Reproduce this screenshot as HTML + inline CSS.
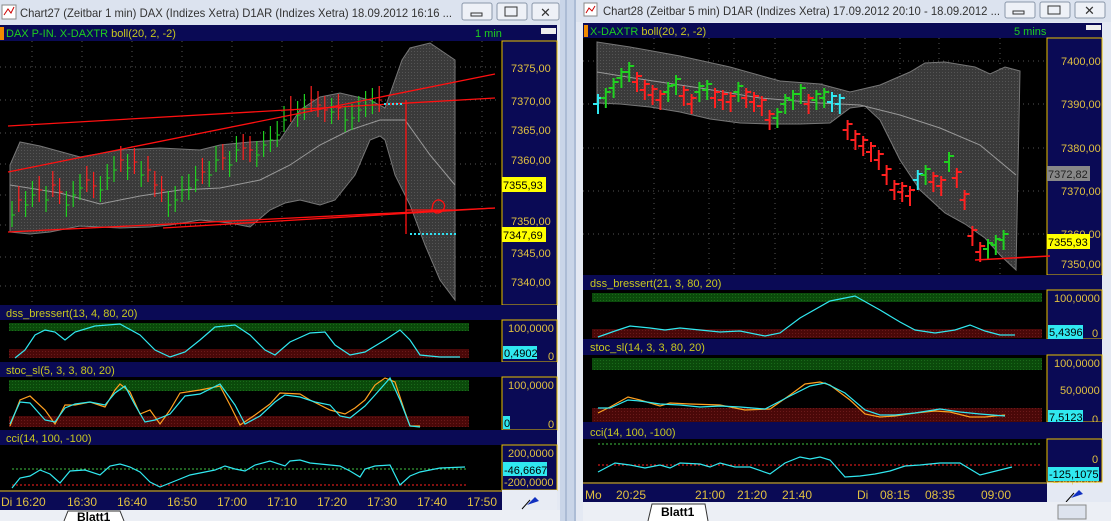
<!DOCTYPE html>
<html><head><meta charset="utf-8"><style>
body{margin:0;width:1111px;height:521px;overflow:hidden;background:#dfe6f2;font-family:"Liberation Sans",sans-serif}
svg{position:absolute;left:0;top:0}
</style></head><body>
<svg id="s" width="1111" height="521" xmlns="http://www.w3.org/2000/svg" font-family="Liberation Sans, sans-serif">
<defs>
<pattern id="gp" width="3" height="3" patternUnits="userSpaceOnUse"><rect width="3" height="3" fill="#3a3a3a"/><rect width="1" height="1" fill="#555"/></pattern>
<pattern id="gr" width="3" height="3" patternUnits="userSpaceOnUse"><rect width="3" height="3" fill="#0b4a0b"/><rect width="1" height="1" fill="#1a6a1a"/></pattern>
<pattern id="rd" width="3" height="3" patternUnits="userSpaceOnUse"><rect width="3" height="3" fill="#4a0808"/><rect width="1" height="1" fill="#6a1a1a"/></pattern>
</defs>
<!-- LEFT WINDOW -->
<rect x="0" y="0" width="560" height="521" fill="#e4e9f3"/>
<rect x="0" y="0" width="560" height="25" fill="#dce3ef"/>
<rect x="2" y="5" width="14" height="14" fill="#fff" stroke="#888"/><path d="M4 15 L8 9 L11 13 L14 7" stroke="#c00" fill="none"/>
<text x="20" y="17" font-size="12" fill="#333" textLength="432" lengthAdjust="spacingAndGlyphs">Chart27 (Zeitbar 1 min)  DAX (Indizes Xetra) D1AR (Indizes Xetra) 18.09.2012 16:16 ...</text>
<g fill="#eef1f7" stroke="#8a97aa"><rect x="462" y="3" width="30" height="17" rx="2"/><rect x="497" y="3" width="30" height="17" rx="2"/><rect x="532" y="3" width="27" height="17" rx="2"/></g>
<rect x="471" y="13" width="11" height="3" fill="none" stroke="#333"/><rect x="505" y="7" width="12" height="9" fill="none" stroke="#333"/>
<text x="540" y="17" font-size="13" fill="#333">✕</text>
<rect x="0" y="25" width="557" height="16" fill="#0a0a55"/>
<rect x="0" y="27" width="4" height="13" fill="#f08a00"/>
<text x="6" y="37" font-size="11"><tspan fill="#1fcf1f">DAX P-IN. X-DAXTR </tspan><tspan fill="#c8c820">boll(20, 2, -2)</tspan></text>
<text x="475" y="37" font-size="11" fill="#1fcf1f">1 min</text>
<rect x="541" y="28" width="15" height="6" fill="#eee"/>
<rect x="0" y="41" width="502" height="264" fill="#000"/>
<rect x="502" y="41" width="55" height="264" fill="#0a0a55" stroke="#e8c000"/>
<g id="lgrid"></g>
<path d="M10,165 L20,142 L40,146 L80,157 L120,150 L160,148 L200,150 L220,145 L250,142 L280,140 L300,110 L320,97 L340,93 L370,100 L385,108 L402,60 L410,48 L430,43 L455,60 L455,300 L440,280 L425,245 L410,205 L395,175 L385,140 L380,136 L370,140 L355,175 L335,200 L320,205 L300,200 L285,203 L270,210 L250,227 L230,223 L200,220 L170,225 L150,227 L120,228 L80,226 L50,232 L30,234 L10,232 Z" fill="url(#gp)" stroke="#777"/>
<path d="M10,185 L60,193 L100,204 L140,196 L180,190 L220,188 L260,180 L290,165 L320,145 L350,130 L380,120 L405,120 L430,155 L455,185" stroke="#999" fill="none"/>
<g id="lbars"></g>
<g stroke="#ff1010" stroke-width="1.3" fill="none">
<line x1="8" y1="172" x2="495" y2="74"/><line x1="8" y1="126" x2="495" y2="98"/>
<line x1="8" y1="232" x2="495" y2="208"/><line x1="163" y1="228" x2="495" y2="208"/>
<line x1="406" y1="100" x2="406" y2="234"/><line x1="406" y1="210" x2="452" y2="210"/>
<path d="M433,204 q4,-7 10,-2 q4,5 -2,10 q-6,3 -9,-3 z"/>
</g>
<line x1="410" y1="234" x2="456" y2="234" stroke="#30e0f0" stroke-dasharray="2 2" stroke-width="2"/>
<line x1="384" y1="104" x2="404" y2="104" stroke="#30e0f0" stroke-dasharray="2 2" stroke-width="2"/>
<g fill="#e0c040" font-size="11"><text x="511" y="72">7375,00</text><text x="511" y="105">7370,00</text><text x="511" y="134">7365,00</text><text x="511" y="164">7360,00</text><text x="511" y="225">7350,00</text><text x="511" y="257">7345,00</text><text x="511" y="286">7340,00</text></g>
<rect x="502" y="177" width="44" height="15" fill="#ffff00"/><text x="503" y="189" font-size="11" fill="#000">7355,93</text>
<rect x="502" y="227" width="44" height="15" fill="#ffff00"/><text x="503" y="239" font-size="11" fill="#000">7347,69</text>
<!-- sub panels left -->
<rect x="0" y="305" width="557" height="15" fill="#0a0a55"/><text x="6" y="317" font-size="11" fill="#c8c820">dss_bressert(13, 4, 80, 20)</text>
<rect x="0" y="320" width="502" height="42" fill="#000"/><rect x="9" y="323" width="460" height="8" fill="url(#gr)"/><rect x="9" y="349" width="460" height="9" fill="url(#rd)"/>
<rect x="502" y="320" width="55" height="42" fill="#0a0a55" stroke="#e8c000"/>
<text x="508" y="332" font-size="11" fill="#e0c040">100,0000</text><text x="548" y="360" font-size="11" fill="#e0c040">0</text>
<rect x="503" y="346" width="34" height="13" fill="#30e8f0"/><text x="504" y="357" font-size="11" fill="#000">0,4902</text>
<rect x="0" y="362" width="557" height="15" fill="#0a0a55"/><text x="6" y="374" font-size="11" fill="#c8c820">stoc_sl(5, 3, 3, 80, 20)</text>
<rect x="0" y="377" width="502" height="53" fill="#000"/><rect x="9" y="380" width="460" height="11" fill="url(#gr)"/><rect x="9" y="416" width="460" height="11" fill="url(#rd)"/>
<rect x="502" y="377" width="55" height="53" fill="#0a0a55" stroke="#e8c000"/>
<text x="508" y="389" font-size="11" fill="#e0c040">100,0000</text><text x="548" y="428" font-size="11" fill="#e0c040">0</text>
<rect x="503" y="416" width="7" height="13" fill="#30e8f0"/><text x="504" y="427" font-size="11" fill="#000">0</text>
<rect x="0" y="430" width="557" height="15" fill="#0a0a55"/><text x="6" y="442" font-size="11" fill="#c8c820">cci(14, 100, -100)</text>
<rect x="0" y="445" width="502" height="45" fill="#000"/>
<line x1="12" y1="469" x2="467" y2="469" stroke="#40c040" stroke-dasharray="2 2"/><line x1="12" y1="485" x2="467" y2="485" stroke="#ff2020" stroke-dasharray="2 2"/>
<rect x="502" y="445" width="55" height="45" fill="#0a0a55" stroke="#e8c000"/>
<text x="508" y="457" font-size="11" fill="#e0c040">200,0000</text><text x="504" y="486" font-size="11" fill="#e0c040">-200,0000</text>
<rect x="503" y="462" width="44" height="14" fill="#30e8f0"/><text x="504" y="474" font-size="11" fill="#000">-46,6667</text>
<rect x="0" y="490" width="502" height="20" fill="#0a0a55"/><rect x="502" y="490" width="55" height="20" fill="#e8ecf4"/>
<line x1="0" y1="491" x2="502" y2="491" stroke="#e8c000"/>
<g font-size="12" fill="#e0c040"><text x="1" y="506">Di 16:20</text><text x="67" y="506">16:30</text><text x="117" y="506">16:40</text><text x="167" y="506">16:50</text><text x="217" y="506">17:00</text><text x="267" y="506">17:10</text><text x="317" y="506">17:20</text><text x="367" y="506">17:30</text><text x="417" y="506">17:40</text><text x="467" y="506">17:50</text></g>
<path d="M527,505 l8,-8 l4,4 z" fill="#1030c0"/><line x1="522" y1="509" x2="530" y2="500" stroke="#000"/>
<rect x="0" y="510" width="560" height="11" fill="#eceff5"/>
<path d="M64,521 L68,511 L120,511 L124,521" fill="#fff" stroke="#333"/><text x="77" y="521" font-size="12" font-weight="bold" fill="#000">Blatt1</text>
<!-- divider -->
<rect x="560" y="0" width="16" height="521" fill="#c9d5e8"/><line x1="566" y1="0" x2="566" y2="521" stroke="#8fa2c2"/><line x1="575" y1="0" x2="575" y2="521" stroke="#8fa2c2"/>
<!-- RIGHT WINDOW -->
<rect x="576" y="0" width="535" height="521" fill="#e4e9f3"/>
<rect x="576" y="0" width="535" height="22" fill="#dce3ef"/>
<rect x="584" y="3" width="13" height="13" fill="#fff" stroke="#888"/><path d="M586 13 L589 8 L592 11 L595 6" stroke="#c00" fill="none"/>
<text x="603" y="15" font-size="12" fill="#333" textLength="397" lengthAdjust="spacingAndGlyphs">Chart28 (Zeitbar 5 min)  D1AR (Indizes Xetra) 17.09.2012 20:10 - 18.09.2012 ...</text>
<g fill="#eef1f7" stroke="#8a97aa"><rect x="1005" y="2" width="30" height="16" rx="2"/><rect x="1040" y="2" width="30" height="16" rx="2"/><rect x="1075" y="2" width="30" height="16" rx="2"/></g>
<rect x="1013" y="11" width="11" height="3" fill="none" stroke="#333"/><rect x="1048" y="6" width="12" height="8" fill="none" stroke="#333"/>
<text x="1084" y="15" font-size="13" fill="#333">✕</text>
<rect x="583" y="23" width="519" height="15" fill="#0a0a55"/>
<rect x="584" y="25" width="4" height="12" fill="#f08a00"/>
<text x="590" y="35" font-size="11"><tspan fill="#1fcf1f">X-DAXTR </tspan><tspan fill="#c8c820">boll(20, 2, -2)</tspan></text>
<text x="1014" y="35" font-size="11" fill="#1fcf1f">5 mins</text>
<rect x="1086" y="25" width="15" height="5" fill="#eee"/>
<rect x="583" y="38" width="464" height="237" fill="#000"/>
<rect x="1047" y="38" width="55" height="237" fill="#0a0a55" stroke="#e8c000"/>
<g id="rgrid"></g>
<path d="M597,42 L630,47 L680,56 L730,67 L780,81 L820,84 L850,92 L880,85 L910,72 L925,63 L945,62 L975,67 L990,74 L1005,67 L1020,71 L1016,270 L1000,255 L985,238 L965,224 L945,213 L920,190 L900,160 L880,120 L865,106 L850,108 L830,123 L800,124 L770,124 L740,123 L710,119 L680,112 L650,107 L620,104 L597,103 Z" fill="url(#gp)" stroke="#777"/>
<path d="M597,72 L640,79 L700,88 L760,98 L820,103 L860,105 L900,115 L940,128 L980,145 L1016,175" stroke="#999" fill="none"/>
<g id="rbars"></g>
<path d="M975,260 L1050,256" stroke="#ff1010" stroke-width="1.5"/>
<g fill="#e0c040" font-size="11"><text x="1061" y="65">7400,00</text><text x="1061" y="108">7390,00</text><text x="1061" y="152">7380,00</text><text x="1061" y="195">7370,00</text><text x="1061" y="238">7360,00</text><text x="1061" y="268">7350,00</text></g>
<rect x="1047" y="166" width="43" height="15" fill="#888"/><text x="1048" y="178" font-size="11" fill="#222">7372,82</text>
<rect x="1047" y="234" width="43" height="15" fill="#ffff00"/><text x="1048" y="246" font-size="11" fill="#000">7355,93</text>
<rect x="583" y="275" width="519" height="15" fill="#0a0a55"/><text x="590" y="287" font-size="11" fill="#c8c820">dss_bressert(21, 3, 80, 20)</text>
<rect x="583" y="290" width="464" height="49" fill="#000"/><rect x="592" y="293" width="450" height="9" fill="url(#gr)"/><rect x="592" y="329" width="450" height="9" fill="url(#rd)"/>
<rect x="1047" y="290" width="55" height="49" fill="#0a0a55" stroke="#e8c000"/>
<text x="1054" y="302" font-size="11" fill="#e0c040">100,0000</text><text x="1092" y="337" font-size="11" fill="#e0c040">0</text>
<rect x="1048" y="325" width="35" height="14" fill="#30e8f0"/><text x="1049" y="336" font-size="11" fill="#000">5,4396</text>
<rect x="583" y="339" width="519" height="16" fill="#0a0a55"/><text x="590" y="351" font-size="11" fill="#c8c820">stoc_sl(14, 3, 3, 80, 20)</text>
<rect x="583" y="355" width="464" height="67" fill="#000"/><rect x="592" y="358" width="450" height="12" fill="url(#gr)"/><rect x="592" y="408" width="450" height="14" fill="url(#rd)"/>
<rect x="1047" y="355" width="55" height="67" fill="#0a0a55" stroke="#e8c000"/>
<text x="1054" y="367" font-size="11" fill="#e0c040">100,0000</text><text x="1060" y="394" font-size="11" fill="#e0c040">50,0000</text><text x="1092" y="423" font-size="11" fill="#e0c040">0</text>
<rect x="1048" y="410" width="35" height="14" fill="#30e8f0"/><text x="1049" y="421" font-size="11" fill="#000">7,5123</text>
<rect x="583" y="422" width="519" height="17" fill="#0a0a55"/><text x="590" y="436" font-size="11" fill="#c8c820">cci(14, 100, -100)</text>
<rect x="583" y="439" width="464" height="43" fill="#000"/>
<line x1="598" y1="444" x2="1040" y2="444" stroke="#40c040" stroke-dasharray="2 2"/><line x1="598" y1="465" x2="1040" y2="465" stroke="#ff2020" stroke-dasharray="2 2"/>
<rect x="1047" y="439" width="55" height="43" fill="#0a0a55" stroke="#e8c000"/>
<text x="1092" y="463" font-size="11" fill="#e0c040">0</text><text x="1049" y="483" font-size="11" fill="#e0c040">-200,0000</text>
<rect x="1048" y="467" width="51" height="14" fill="#30e8f0"/><text x="1049" y="478" font-size="11" fill="#000">-125,1075</text>
<rect x="583" y="482" width="464" height="20" fill="#0a0a55"/><line x1="583" y1="483" x2="1047" y2="483" stroke="#e8c000"/>
<g font-size="12" fill="#e0c040"><text x="585" y="499">Mo</text><text x="616" y="499">20:25</text><text x="695" y="499">21:00</text><text x="737" y="499">21:20</text><text x="782" y="499">21:40</text><text x="857" y="499">Di</text><text x="880" y="499">08:15</text><text x="925" y="499">08:35</text><text x="981" y="499">09:00</text></g>
<path d="M1071,498 l8,-8 l4,4 z" fill="#1030c0"/><line x1="1066" y1="502" x2="1074" y2="493" stroke="#000"/>
<rect x="583" y="502" width="528" height="19" fill="#eceff5"/>
<path d="M648,521 L652,504 L705,504 L708,521" fill="#fff" stroke="#333"/><text x="661" y="516" font-size="12" font-weight="bold" fill="#000">Blatt1</text>
<rect x="1058" y="505" width="28" height="14" fill="#dde3ee" stroke="#888"/>
</svg>
<script>
var NS="http://www.w3.org/2000/svg";
function el(p,t,a){var e=document.createElementNS(NS,t);for(var k in a)e.setAttribute(k,a[k]);p.appendChild(e);return e;}
function poly(p,pts,c){el(document.getElementById("s"),"polyline",{points:pts,fill:"none",stroke:c,"stroke-width":1.2});}
var lg=document.getElementById("lgrid");
[32,82,132,182,232,282,332,382,432,482].forEach(function(x){el(lg,"line",{x1:x,y1:41,x2:x,y2:305,stroke:"#555","stroke-dasharray":"1 4"});});
[67,100,133,164,195,225,257,286].forEach(function(y){el(lg,"line",{x1:0,y1:y,x2:500,y2:y,stroke:"#555","stroke-dasharray":"1 4"});});
var rg=document.getElementById("rgrid");
[654,709,734,775,822,865,900,939,1000].forEach(function(x){el(rg,"line",{x1:x,y1:38,x2:x,y2:275,stroke:"#555","stroke-dasharray":"1 4"});});
[61,104,148,191,234,277].forEach(function(y){el(rg,"line",{x1:583,y1:y,x2:1045,y2:y,stroke:"#555","stroke-dasharray":"1 4"});});
var lb=document.getElementById("lbars");
var c=[215,200,205,195,190,200,185,192,205,195,188,180,186,190,178,170,160,168,162,175,170,185,190,205,200,190,188,180,172,175,160,158,165,150,148,150,155,145,140,135,120,110,115,108,100,105,110,112,108,120,118,110,105,102,100];
for(var i=0;i<c.length;i++){var x=12+i*6.8,y=c[i];var col=(c[i+1]||y)<y?"#20d020":"#ff2020";el(lb,"line",{x1:x,y1:y-14,x2:x,y2:y+12,stroke:col,"stroke-width":1.2});el(lb,"line",{x1:x,y1:y,x2:x+3,y2:y,stroke:col});}
var rb=document.getElementById("rbars");
var rc=[104,98,88,78,72,82,90,95,100,92,85,96,104,92,90,98,100,102,92,98,102,106,120,118,104,100,94,104,100,98,102,104,130,140,146,152,160,175,190,192,196,180,175,182,186,162,178,200,236,252,249,245,240];
for(var j=0;j<rc.length;j++){var x2=598+j*7.8,y2=rc[j];var col2=(j>0&&rc[j]<rc[j-1])?"#20d020":"#ff2020";if(j==0||j==30||j==31||j==41)col2="#30e8f0";el(rb,"line",{x1:x2,y1:y2-10,x2:x2,y2:y2+10,stroke:col2,"stroke-width":2});el(rb,"line",{x1:x2-5,y1:y2,x2:x2,y2:y2,stroke:col2,"stroke-width":2});el(rb,"line",{x1:x2,y1:y2-6,x2:x2+5,y2:y2-6,stroke:col2,"stroke-width":2});}
poly(0,"15,358 25,350 35,335 45,330 55,332 65,340 75,332 95,326 120,324 140,335 155,350 170,357 185,352 200,340 215,327 235,325 250,335 265,350 275,355 290,342 310,333 325,332 335,345 350,355 365,352 385,340 400,330 410,340 420,355 440,357 460,357","#30e8f0");
poly(0,"10,426 20,400 30,396 45,410 55,424 65,405 75,405 90,402 105,407 115,390 120,384 130,392 140,414 150,410 160,424 170,410 180,393 200,390 220,386 230,405 240,425 255,415 270,404 280,393 300,394 310,400 320,405 330,410 345,414 355,408 365,400 375,385 385,378 395,382 405,412 410,426 420,426","#ffa020");
poly(0,"10,424 20,402 30,403 45,420 55,422 65,408 75,404 90,402 105,405 115,393 125,386 135,405 145,422 155,420 170,414 185,396 200,394 220,384 235,405 245,424 260,416 275,402 285,395 300,397 315,402 330,405 340,416 350,418 365,406 375,395 390,378 400,400 410,426 420,427","#30e8f0");
poly(0,"12,488 20,478 30,476 40,470 50,474 60,483 70,471 85,470 100,475 110,466 120,464 130,467 140,472 150,482 160,487 175,481 190,475 205,472 215,470 225,466 235,469 245,471 255,465 270,461 285,466 290,461 300,460 310,463 320,464 330,465 340,466 350,471 360,477 365,469 375,466 390,465 400,485 410,476 420,472 440,468 465,467","#30e8f0");
poly(0,"598,337 615,331 630,326 650,328 665,330 680,328 700,330 720,332 740,331 765,336 780,333 800,318 830,301 855,296 880,310 900,322 915,330 935,333 955,330 970,325 985,331 1000,335 1015,335","#30e8f0");
poly(0,"598,413 610,407 628,397 640,400 660,406 670,403 690,404 720,405 745,410 770,409 790,395 805,384 820,382 830,385 850,400 865,414 880,417 895,416 915,413 935,411 950,412 970,417 985,417 1005,415","#ffa020");
poly(0,"598,408 610,408 628,400 640,401 660,404 680,405 700,407 720,406 740,407 765,409 790,396 810,386 825,383 845,393 865,410 880,415 895,415 915,413 940,409 960,412 980,414 1005,416","#30e8f0");
poly(0,"598,472 615,463 630,465 645,468 660,465 670,468 680,463 700,464 710,467 720,463 735,467 750,467 770,474 785,463 800,457 810,459 820,457 830,460 845,477 860,476 875,474 890,471 905,466 920,465 940,463 960,463 980,475 1000,470 1012,467","#30e8f0");
</script>
</body></html>
